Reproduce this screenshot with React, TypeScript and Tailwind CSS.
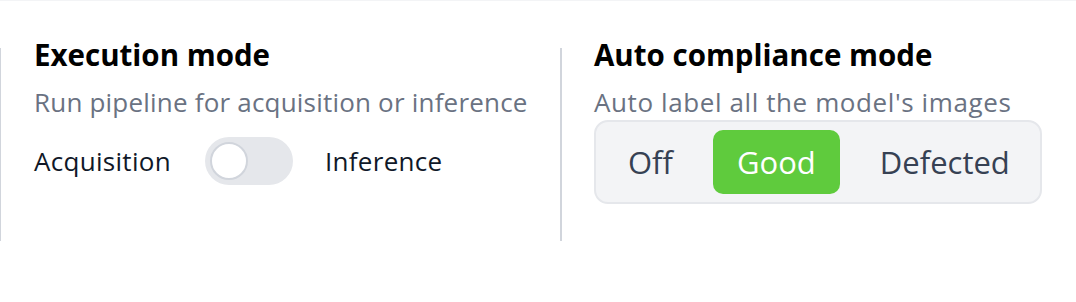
import { useState } from 'react';

const MODES = ['Off', 'Good', 'Defected'];

export default function App() {
    const [inference, setInference] = useState(false);
    const [compliance, setCompliance] = useState('Good');

    return (
        <div className="min-h-screen bg-white border-t border-gray-100 pt-[36px] font-['Open_Sans','Noto_Sans',sans-serif]">
            <div className="flex">
                {/* Execution mode */}
                <div className="flex w-[560px] shrink-0">
                    <div className="mt-[11px] h-[193px] w-px shrink-0 bg-gray-300" />
                    <div className="pl-[33px]">
                        <h3 className="text-[29.5px] leading-[36px] font-bold text-black">Execution mode</h3>
                        <p className="mt-[13px] text-[26px] leading-[32px] tracking-[0.2px] text-gray-500">
                            Run pipeline for acquisition or inference
                        </p>
                        <div className="mt-[19px] flex items-center gap-8 text-[26px] tracking-[0.3px] text-gray-900">
                            <span>Acquisition</span>
                            <button
                                type="button"
                                onClick={() => setInference(!inference)}
                                className={`ml-[2px] flex h-12 w-22 items-center rounded-full bg-gray-200 px-[5px] ${inference ? 'justify-end' : 'justify-start'}`}
                            >
                                <span className="block h-[38px] w-[38px] rounded-full border-2 border-gray-300 bg-white" />
                            </button>
                            <span>Inference</span>
                        </div>
                    </div>
                </div>

                {/* Auto compliance mode */}
                <div className="flex">
                    <div className="mt-[11px] h-[193px] w-[2px] shrink-0 bg-gray-300" />
                    <div className="pl-8">
                        <h3 className="text-[29.5px] leading-[36px] font-bold text-black">Auto compliance mode</h3>
                        <p className="mt-[13px] text-[26px] leading-[32px] tracking-[0.6px] text-gray-500">
                            Auto label all the model's images
                        </p>
                        <div className="mt-[2px] flex w-[448px] gap-4 rounded-[14px] border-2 border-gray-200 bg-gray-100 p-2">
                            {MODES.map((mode) => (
                                <button
                                    key={mode}
                                    type="button"
                                    onClick={() => setCompliance(mode)}
                                    className={`h-16 flex-auto rounded-[10px] px-6 text-[31px] ${
                                        compliance === mode ? 'bg-[#5fcb3d] text-white' : 'text-gray-700'
                                    }`}
                                >
                                    {mode}
                                </button>
                            ))}
                        </div>
                    </div>
                </div>
            </div>
        </div>
    );
}
